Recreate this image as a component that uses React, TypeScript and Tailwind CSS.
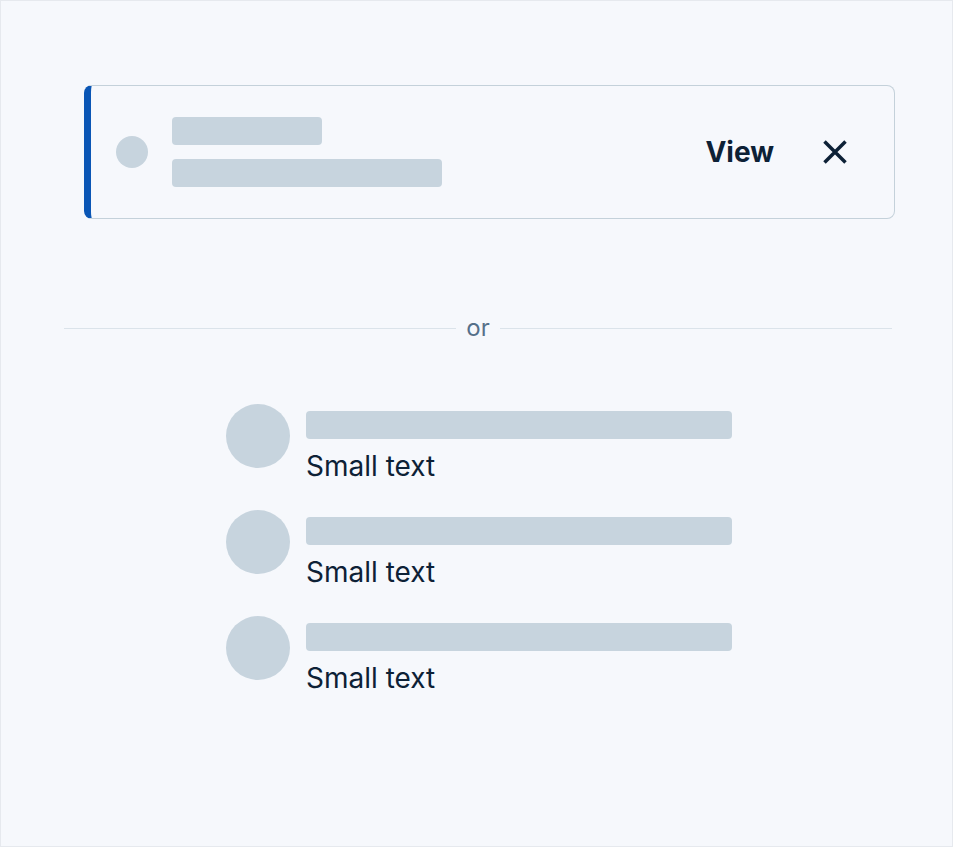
const items = [1, 2, 3]

function CloseIcon() {
  return (
    <svg width="24" height="24" viewBox="0 0 24 24" fill="none" stroke="#0d2136" strokeWidth="3.5">
      <path d="M1.5 1.5 L22.5 22.5 M22.5 1.5 L1.5 22.5" />
    </svg>
  )
}

export default function App() {
  return (
    <div className="w-[954px] h-[848px] bg-white">
      <div className="w-[953px] h-[847px] border border-[#e6e9ee] bg-[#f6f8fc] font-['Inter',sans-serif] text-[#0d2136]">
        {/* Notice card */}
        <div className="mt-[84px] ml-[83px] w-[811px] h-[134px] rounded-lg border border-[#c4d1da] border-l-[7px] border-l-[#0a56b5] flex items-center pl-[25px] pr-[47px]">
          <div className="w-8 h-8 rounded-full bg-[#c7d4de]" />
          <div className="ml-6 flex flex-col gap-[14px]">
            <div className="w-[150px] h-[28px] rounded bg-[#c7d4de]" />
            <div className="w-[270px] h-[28px] rounded bg-[#c7d4de]" />
          </div>
          <div className="ml-auto flex items-center gap-[49px]">
            <span className="text-[28px] font-bold leading-8">View</span>
            <CloseIcon />
          </div>
        </div>

        {/* Divider */}
        <div className="mt-[93px] ml-[63px] w-[828px] flex items-center">
          <div className="flex-1 h-px bg-[#dbe3ea]" />
          <span className="px-[10px] text-[24px] leading-8 text-[#56708a]">or</span>
          <div className="flex-1 h-px bg-[#dbe3ea]" />
        </div>

        {/* List */}
        <div className="mt-[60px] ml-[225px] flex flex-col gap-[28px]">
          {items.map(i => (
            <div key={i} className="flex gap-4">
              <div className="w-16 h-16 rounded-full bg-[#c7d4de]" />
              <div className="pt-[7px] flex flex-col">
                <div className="w-[426px] h-[28px] rounded bg-[#c7d4de]" />
                <span className="mt-[11px] text-[28px] leading-8">Small text</span>
              </div>
            </div>
          ))}
        </div>
      </div>
    </div>
  )
}
